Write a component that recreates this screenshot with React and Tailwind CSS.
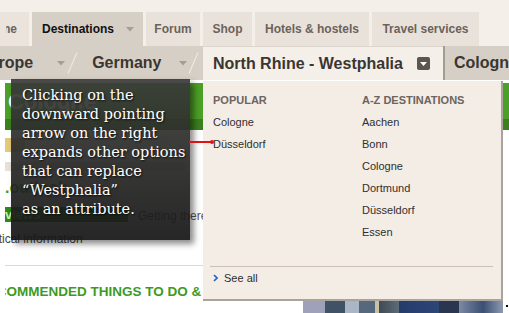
function Caret({ className = "" }) {
  return (
    <svg width="8" height="5" viewBox="0 0 8 5" className={className}>
      <path d="M0 0 H8 L4 4.5 Z" fill="#a59e96" />
    </svg>
  );
}

function Slash() {
  return (
    <svg width="11" height="22" viewBox="0 0 11 22" className="shrink-0">
      <path d="M10 0.5 L1 21.5" stroke="#ede7e0" strokeWidth="1.2" />
    </svg>
  );
}

const tabs = [
  { label: "Forum", w: "w-[54px]" },
  { label: "Shop", w: "w-[49px]" },
  { label: "Hotels & hostels", w: "w-[114px]" },
  { label: "Travel services", w: "w-[107px]" },
];

const azDestinations = ["Aachen", "Bonn", "Cologne", "Dortmund", "Düsseldorf", "Essen"];

export default function App() {
  return (
    <div className="relative h-[313px] w-[509px] overflow-hidden bg-white font-['Liberation_Sans',Arial,sans-serif]">
      {/* top navigation tabs */}
      <div className="flex h-[46px] items-end gap-[3px] bg-[#f4efe9]">
        <div className="flex h-[34px] w-[29px] items-center bg-[#ebe4dc] pl-[6px] text-[12px] font-bold text-[#6b635c]">
          <span className="flex w-[11px] justify-end overflow-hidden whitespace-nowrap">Home</span>
        </div>
        <div className="flex h-[34px] w-[111px] items-center bg-[#d6cfc6] pl-[10px] text-[12px] font-bold text-[#111]">
          Destinations
          <Caret className="ml-[12px]" />
        </div>
        {tabs.map((tab) => (
          <div
            key={tab.label}
            className={`flex h-[34px] ${tab.w} items-center justify-center bg-[#e9e2da] text-[12px] font-bold text-[#6b635c]`}
          >
            {tab.label}
          </div>
        ))}
      </div>

      {/* breadcrumb bar */}
      <div className="relative z-20 flex h-[34px] text-[16px] font-bold text-[#3a3632]">
        <div className="flex w-[203px] items-center overflow-hidden bg-[#d6cfc6]">
          <span className="ml-[-22px] whitespace-nowrap">Europe</span>
          <Caret className="ml-[24px] shrink-0" />
          <span className="ml-[2px]">
            <Slash />
          </span>
          <span className="ml-[14px] whitespace-nowrap">Germany</span>
          <Caret className="ml-[17px] shrink-0" />
          <span className="ml-[1px]">
            <Slash />
          </span>
        </div>
        <div className="relative flex w-[240px] items-center border-t border-[#dcd5cd] bg-[#f4efe9] pl-[10px]">
          <span className="whitespace-nowrap">North Rhine - Westphalia</span>
          <span className="ml-auto mr-[13px] flex h-[13px] w-[13px] items-center justify-center rounded-[2px] bg-[#5b5650]">
            <svg width="7" height="4" viewBox="0 0 7 4">
              <path d="M0 0 H7 L3.5 4 Z" fill="#fff" />
            </svg>
          </span>

          {/* dropdown panel */}
          <div className="absolute left-0 top-[34px] flex h-[220px] w-[300px] flex-col border-b-2 border-r-2 border-[#aaa39c] bg-[#f3ede6] font-normal">
            <div className="flex pl-[10px] pt-[12px]">
              <div className="w-[149px]">
                <div className="text-[11px] font-bold leading-[14px] text-[#6d645d]">POPULAR</div>
                <div className="mt-[4px] text-[11px] leading-[22px] text-[#2f2f2f]">
                  <div>Cologne</div>
                  <div>Düsseldorf</div>
                </div>
              </div>
              <div>
                <div className="text-[11px] font-bold leading-[14px] text-[#6d645d]">A-Z DESTINATIONS</div>
                <div className="mt-[4px] text-[11px] leading-[22px] text-[#2f2f2f]">
                  {azDestinations.map((name) => (
                    <div key={name}>{name}</div>
                  ))}
                </div>
              </div>
            </div>
            <div className="ml-[7px] mr-[8px] mt-[23px] border-t border-[#c9c1b9]" />
            <div className="mt-[4px] flex items-center pl-[10px] text-[11px] leading-[14px] text-[#2f2f2f]">
              <svg width="5" height="8" viewBox="0 0 5 8" className="mr-[6px]">
                <path d="M1 1 L4 4 L1 7" stroke="#1f63c6" strokeWidth="1.6" fill="none" />
              </svg>
              See all
            </div>
          </div>
        </div>
        <div className="w-[2px] bg-[#a39c94]" />
        <div className="flex flex-1 items-center overflow-hidden whitespace-nowrap bg-[#d6cfc6] pl-[9px]">
          Cologne
        </div>
      </div>

      {/* page content under the menu */}
      <div className="flex flex-col pl-[5px]">
        <div className="mt-[3px] flex h-[36px] items-center bg-[#4c9f27] pl-[3px] text-[22px] font-bold text-white">
          Cologne
        </div>
        <div className="h-[11px] bg-[#3b7f1f]" />
        <div className="mt-[8px] h-[14px] w-[20px] bg-[#e3c978]" />
        <div className="mt-[10px] h-[9px] w-[180px] bg-[#e6e0d8]" />
        <div className="mt-[9px] text-[16px] font-bold leading-[16px] text-[#3d9a1f]">.outlook</div>
        <div className="mt-[11px] flex h-[15px] items-center">
          <div className="flex h-[15px] w-[123px] items-center bg-[#2f8a1a] text-[13px] font-bold text-[#c8f0b0]">
            views
          </div>
          <span className="ml-[10px] mt-[2px] whitespace-nowrap text-[12px] text-[#555]">Getting there</span>
        </div>
        <div className="mt-[10px] ml-[-31px] whitespace-nowrap text-[12px] leading-[14px] text-[#444]">
          Practical information
        </div>
        <div className="mt-[19px] w-[198px] border-t border-[#dadada]" />
        <div className="mt-[18px] overflow-hidden">
          <div className="ml-[-27px] whitespace-nowrap text-[13.5px] font-bold leading-[16px] text-[#3d9a1f]">
            RECOMMENDED THINGS TO DO &amp; SEE
          </div>
        </div>
        <div className="ml-[298px] h-[13px] w-[200px] bg-[linear-gradient(90deg,#9ea1b9_0%,#9ea1b9_11%,#3f5266_11%,#3f5266_21%,#aab5c6_21%,#aab5c6_28%,#56687d_28%,#56687d_36%,#c9c2a0_36%,#c9c2a0_38%,#3e4a55_38%,#5d6b78_48%,#243c6a_48%,#2c4678_68%,#2a3550_68%,#2a3550_78%,#7c8aa3_78%,#3a4f73_90%,#8e9ab0_100%)]" />
      </div>
      <div className="absolute left-[506px] top-[305px] h-[2px] w-[2px] bg-black" />

      {/* tooltip annotation */}
      <div className="absolute left-[11px] top-[79px] z-30 h-[161px] w-[179px] bg-[linear-gradient(180deg,rgba(58,58,56,0.92)_0%,rgba(22,22,22,0.93)_100%)] pl-[11px] pt-[7px] font-['DejaVu_Serif',serif] text-[14.5px] leading-[19px] text-white shadow-[4px_4px_6px_rgba(0,0,0,0.45)] [text-shadow:1px_1px_2px_rgba(0,0,0,0.8)]">
        Clicking on the
        <br />
        downward pointing
        <br />
        arrow on the right
        <br />
        expands other options
        <br />
        that can replace
        <br />
        “Westphalia”
        <br />
        as an attribute.
      </div>

      {/* pointer line */}
      <div className="absolute left-[189px] top-[141px] z-30 h-[2px] w-[23px] bg-[#e31212]" />
      <div className="absolute left-[210px] top-[140px] z-30 h-[4px] w-[4px] rounded-full bg-[#e31212]" />
    </div>
  );
}
